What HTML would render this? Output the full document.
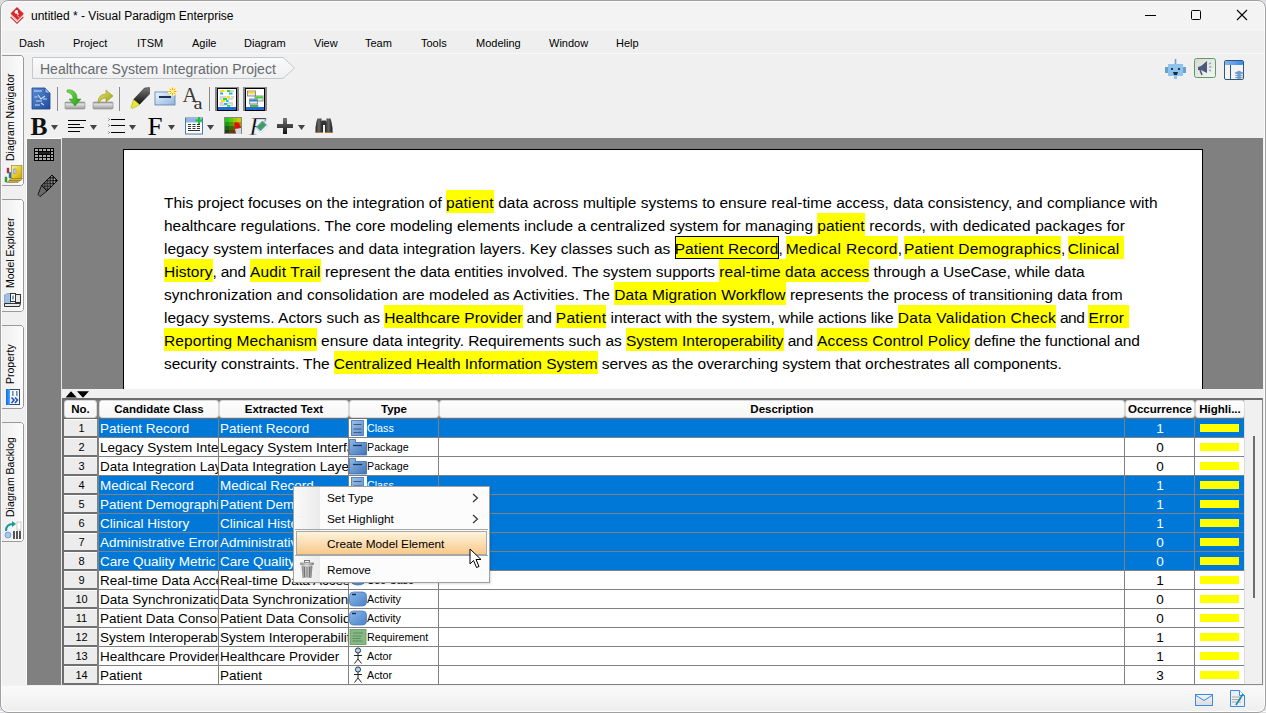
<!DOCTYPE html>
<html><head><meta charset="utf-8">
<style>
*{margin:0;padding:0;box-sizing:border-box}
html,body{width:1266px;height:713px;overflow:hidden;background:#dcdce0;font-family:"Liberation Sans",sans-serif;color:#000}
.a{position:absolute}
svg{display:block}
#titlebar{left:0;top:0;width:1266px;height:31px;background:#f3f3f3}
#menubar{left:0;top:31px;width:1266px;height:22px;background:#efefef}
.mi{position:absolute;top:37px;font-size:11px;color:#000;white-space:nowrap}
.vt{position:absolute;left:2px;width:22px;background:linear-gradient(to right,#fdfdfd,#f4f4f4);border:1px solid #c4c4c4;border-left:none;border-radius:0 6px 6px 0}
.vtt{position:absolute;left:4px;font-size:10.5px;line-height:12px;white-space:nowrap;transform-origin:0 0;transform:rotate(-90deg)}
#canvas{left:62px;top:138px;width:1201px;height:251px;background:#808080}
#subtb{left:27px;top:139px;width:34px;height:546px;background:#808080}
#page{left:123px;top:149px;width:1080px;height:240px;background:#fff;border:1px solid #000;border-bottom:none}
#doc{left:164px;top:191px;width:1010px;font-size:15.5px;line-height:23px;color:#000;white-space:nowrap}
#doc span.h{background:#ffff00;padding:4px 0 2px}
#doc span.b{box-shadow:inset 0 0 0 1px #000;position:relative;z-index:2}
.hd{position:absolute;top:400px;height:18px;background:linear-gradient(#fdfdfd,#f6f6f6);border:1px solid #d8d8d8;border-radius:3px;font-size:11.5px;font-weight:bold;text-align:center;line-height:16px;white-space:nowrap;overflow:hidden}
.nc{position:absolute;left:64px;width:33px;height:19px;background:#ececec;border-top:1px solid #fcfcfc;border-bottom:2px solid #707070;font-size:11px;text-align:center;line-height:16px;padding-left:2px}
.dc{position:absolute;font-size:13.5px;line-height:20px;padding-left:1px;white-space:nowrap;overflow:hidden}
.tc{padding-left:0}
.ti{position:absolute;left:0;top:0}
.tl{position:absolute;left:18px;top:0;font-size:10.7px;line-height:19px}
.oc{text-align:center;font-size:13.5px}
</style></head><body>
<div class="a" style="left:0;top:0;width:1266px;height:713px;background:#f0f0f0;border-radius:8px"></div>
<!-- title bar -->
<div class="a" id="titlebar" style="border-radius:8px 8px 0 0"></div>
<svg class="a" style="left:4px;top:4px" width="26" height="24" viewBox="4 4 26 24">
<path d="M17 7L23.8 13.8L17.5 20L10.5 13.5Z" fill="#d42a2a"/>
<path d="M11 16.5L17 22.5L23 16.5L23.8 17.3L17 24L10.2 17.3Z" fill="#d42a2a"/>
<path d="M11.5 14.5L17.2 20.3L23 14.5L23.5 15L17.2 21.3L11 15Z" fill="#e86a6a" opacity="0.7"/>
<path d="M15.5 10.5c1 -1 2.5 -0.5 2.5 0.8c0 0.8 -0.5 1.2 -0.2 1.6l1.2 1.2l-1 1l-1.6 -1.6c-0.5 0.2 -1.2 0 -1.6 -0.5c-0.6 -0.8 -0.1 -1.8 0.7 -2.5z" fill="#fff"/>
<path d="M17.2 15.3L19.2 17.3" stroke="#f8d8d8" stroke-width="0.8"/>
</svg>
<div class="a" style="left:31px;top:9px;font-size:12px;white-space:nowrap">untitled * - Visual Paradigm Enterprise</div>
<div class="a" style="left:1145px;top:15px;width:11px;height:1px;background:#000"></div>
<div class="a" style="left:1191px;top:10px;width:10px;height:10px;border:1px solid #000;border-radius:1.5px"></div>
<svg class="a" style="left:1236px;top:9px" width="12" height="12" viewBox="0 0 12 12"><path d="M1 1L11 11M11 1L1 11" stroke="#000" stroke-width="1.1"/></svg>

<!-- menu bar -->
<div class="a" id="menubar"></div>
<div class="a" style="left:0;top:53px;width:1266px;height:1px;background:#f8f8f8"></div>
<div class="mi" style="left:19px">Dash</div>
<div class="mi" style="left:73px">Project</div>
<div class="mi" style="left:137px">ITSM</div>
<div class="mi" style="left:192px">Agile</div>
<div class="mi" style="left:244px">Diagram</div>
<div class="mi" style="left:314px">View</div>
<div class="mi" style="left:365px">Team</div>
<div class="mi" style="left:421px">Tools</div>
<div class="mi" style="left:476px">Modeling</div>
<div class="mi" style="left:549px">Window</div>
<div class="mi" style="left:616px">Help</div>

<!-- vertical tabs -->
<svg class="a" style="left:0;top:0" width="26" height="560" viewBox="0 0 26 560"><defs><linearGradient id="vtg" x1="0" x2="1"><stop offset="0" stop-color="#efefef"/><stop offset="1" stop-color="#fcfcfc"/></linearGradient></defs><path d="M2 55.5H21.5L23.5 57.5V183.5L21.5 185.5H2" fill="url(#vtg)" stroke="#9a9a9a" stroke-width="1"/><path d="M2 199.5H21.5L23.5 201.5V309.5L21.5 311.5H2" fill="url(#vtg)" stroke="#9a9a9a" stroke-width="1"/><path d="M2 325.5H21.5L23.5 327.5V406.5L21.5 408.5H2" fill="url(#vtg)" stroke="#9a9a9a" stroke-width="1"/><path d="M2 422.5H21.5L23.5 424.5V539.5L21.5 541.5H2" fill="url(#vtg)" stroke="#9a9a9a" stroke-width="1"/></svg>
<div class="vtt" style="top:161px">Diagram Navigator</div>
<div class="vtt" style="top:288px">Model Explorer</div>
<div class="vtt" style="top:384px">Property</div>
<div class="vtt" style="top:517px">Diagram Backlog</div>

<!-- breadcrumb -->
<svg class="a" style="left:32px;top:56px" width="266" height="25" viewBox="32 56 266 25">
<defs><linearGradient id="bcg" x1="0" y1="0" x2="0" y2="1"><stop offset="0" stop-color="#fbfbfb"/><stop offset="1" stop-color="#efefef"/></linearGradient></defs>
<path d="M32.5 57.5H283L294.5 68L283 78.5H32.5Z" fill="url(#bcg)" stroke="#c3c9d1" stroke-width="1"/>
</svg>
<div class="a" style="left:40px;top:61px;font-size:14px;color:#656a70;white-space:nowrap">Healthcare System Integration Project</div>

<!-- canvas -->
<div class="a" style="left:26px;top:138px;width:36px;height:548px;background:#fbfbfb"></div><div class="a" id="subtb"></div>
<div class="a" style="left:61px;top:138px;width:1px;height:547px;background:#e8e8e8"></div>
<div class="a" id="canvas"></div>
<div class="a" id="page"></div>
<div class="a" id="doc"><span style="letter-spacing:-0.034px">This project focuses on the integration of </span><span class="h" style="letter-spacing:0.178px">patient</span><span style="letter-spacing:0.025px"> data across multiple systems to ensure real-time access, data consistency, and compliance with</span><br><span style="letter-spacing:-0.013px">healthcare regulations. The core modeling elements include a centralized system for managing </span><span class="h" style="letter-spacing:0.136px">patient</span><span style="letter-spacing:0.093px"> records, with dedicated packages for</span><br><span style="letter-spacing:0.008px">legacy system interfaces and data integration layers. Key classes such as </span><span class="h b" style="letter-spacing:0.098px">Patient Record</span><span style="letter-spacing:-0.761px">, </span><span class="h" style="letter-spacing:0.322px">Medical Record</span><span style="letter-spacing:-1.209px">, </span><span class="h" style="letter-spacing:0.220px">Patient Demographics</span><span style="letter-spacing:-0.959px">, </span><span class="h" style="letter-spacing:0.237px">Clinical </span><br><span class="h" style="letter-spacing:0.038px">History</span><span style="letter-spacing:-0.214px">, and </span><span class="h" style="letter-spacing:0.161px">Audit Trail</span><span style="letter-spacing:-0.046px"> represent the data entities involved. The system supports </span><span class="h" style="letter-spacing:0.132px">real-time data access</span><span style="letter-spacing:-0.036px"> through a UseCase, while data</span><br><span style="letter-spacing:0.038px">synchronization and consolidation are modeled as Activities. The </span><span class="h" style="letter-spacing:0.124px">Data Migration Workflow</span><span style="letter-spacing:0.005px"> represents the process of transitioning data from</span><br><span style="letter-spacing:0.020px">legacy systems. Actors such as </span><span class="h" style="letter-spacing:0.069px">Healthcare Provider</span><span style="letter-spacing:-0.276px"> and </span><span class="h" style="letter-spacing:0.334px">Patient</span><span style="letter-spacing:-0.087px"> interact with the system, while actions like </span><span class="h" style="letter-spacing:0.284px">Data Validation Check</span><span style="letter-spacing:-0.397px"> and </span><span class="h" style="letter-spacing:0.257px">Error </span><br><span class="h" style="letter-spacing:0.107px">Reporting Mechanism</span><span style="letter-spacing:-0.034px"> ensure data integrity. Requirements such as </span><span class="h" style="letter-spacing:-0.002px">System Interoperability</span><span style="letter-spacing:-0.218px"> and </span><span class="h" style="letter-spacing:0.148px">Access Control Policy</span><span style="letter-spacing:-0.136px"> define the functional and</span><br><span style="letter-spacing:-0.085px">security constraints. The </span><span class="h" style="letter-spacing:-0.042px">Centralized Health Information System</span><span style="letter-spacing:-0.055px"> serves as the overarching system that orchestrates all components.</span></div>

<!-- splitter -->
<div class="a" style="left:62px;top:389px;width:1201px;height:9px;background:#f0f0f0"></div>
<svg class="a" style="left:65px;top:391px" width="25" height="7" viewBox="0 0 25 7"><path d="M0.5 6.5L6 0.3L11.8 6.5Z" fill="#000"/><path d="M12 0.3H24L18 6.7Z" fill="#000"/></svg>

<!-- status bar -->
<div class="a" style="left:0;top:685px;width:1266px;height:28px;background:#f0f0f0;border-radius:0 0 8px 8px"></div><div class="a" style="left:0;top:686px;width:1266px;height:27px;background:linear-gradient(#fafafa,#eeeeee);border-radius:0 0 8px 8px"></div><div class="a" style="left:0;top:711px;width:1266px;height:1px;background:#fdfdfd"></div>
<!-- toolbar -->
<svg class="a" style="left:0;top:80px" width="350" height="58" viewBox="0 80 350 58">
<defs>
<linearGradient id="docb" x1="0" y1="0" x2="1" y2="1"><stop offset="0" stop-color="#5b8fd8"/><stop offset="1" stop-color="#1f4c9a"/></linearGradient>
<linearGradient id="barg" x1="0" y1="0" x2="0" y2="1"><stop offset="0" stop-color="#8e8e8e"/><stop offset="0.3" stop-color="#e0e0e0"/><stop offset="1" stop-color="#9a9a9a"/></linearGradient>
<linearGradient id="grn" x1="0" y1="0" x2="1" y2="1"><stop offset="0" stop-color="#7fe05a"/><stop offset="1" stop-color="#1f9a10"/></linearGradient>
<linearGradient id="yel" x1="0" y1="0" x2="1" y2="1"><stop offset="0" stop-color="#eaea70"/><stop offset="1" stop-color="#9a9a10"/></linearGradient>
<linearGradient id="boxb" x1="0" y1="0" x2="1" y2="1"><stop offset="0" stop-color="#eef5ff"/><stop offset="1" stop-color="#8fb3e0"/></linearGradient>
<linearGradient id="dgr" x1="0" y1="0" x2="0" y2="1"><stop offset="0" stop-color="#777"/><stop offset="1" stop-color="#111"/></linearGradient>
</defs>
<!-- doc icon -->
<path d="M32 88h13l5 5v16h-18z" fill="url(#docb)" stroke="#1c4185" stroke-width="0.8"/>
<path d="M45 88v5h5" fill="#8fb5ea" stroke="#1c4185" stroke-width="0.6"/>
<path d="M34 91h8M34.5 97h3M38 95l3 4l4 -3M36 101h6M41 103l3 2M35 105h5M43 99h4" stroke="#dfe9ff" stroke-width="1.1" fill="none" opacity="0.9"/>
<rect x="57" y="87" width="1" height="24" fill="#8a8a8a"/>
<!-- green import -->
<rect x="65" y="102" width="20" height="7" rx="1" fill="url(#barg)" stroke="#8a8a8a" stroke-width="0.6"/>
<path d="M67 90c5 -1 10 2 10 8v1h4l-6 7l-6 -7h4v-1c0 -3 -3 -5 -6 -6z" fill="url(#grn)" stroke="#2a8a1a" stroke-width="0.5"/>
<!-- yellow export -->
<rect x="93" y="102" width="20" height="7" rx="1" fill="url(#barg)" stroke="#8a8a8a" stroke-width="0.6"/>
<path d="M98 103c0 -6 3 -9 8 -9v-4l7 6l-7 6v-4c-3 0 -6 2 -7 5z" fill="url(#yel)" stroke="#8a8a10" stroke-width="0.5"/>
<rect x="119" y="87" width="1" height="24" fill="#8a8a8a"/>
<!-- highlighter -->
<path d="M133.5 99.5L144.5 88L149.5 87.5L149.5 94L139.5 104.5Z" fill="url(#dgr)" stroke="#222" stroke-width="0.5"/>
<path d="M133.5 99.5L139.5 104.5L136.5 106.5L132 108.5L131 107.5L132.5 103Z" fill="#e8e830" stroke="#a0a000" stroke-width="0.5"/>
<!-- blue box with star -->
<rect x="155" y="92" width="20" height="13" fill="url(#boxb)" stroke="#5a7fb0" stroke-width="0.8"/>
<rect x="159" y="96" width="12" height="2" fill="#1d3050"/>
<circle cx="172.5" cy="91.5" r="4.5" fill="#fff4b0"/>
<path d="M172.5 87.5v2.5M172.5 93v2.5M168.5 91.5h2.5M174 91.5h2.5M169.7 88.7l1.6 1.6M173.7 92.7l1.6 1.6M175.3 88.7l-1.6 1.6M171.3 92.7l-1.6 1.6" stroke="#f0a800" stroke-width="1"/>
<!-- Aa -->
<text x="182.5" y="102" font-family="Liberation Serif" font-size="20" fill="#3a3a3a" textLength="15" lengthAdjust="spacingAndGlyphs">A</text>
<text x="193.5" y="108.5" font-family="Liberation Serif" font-size="16" fill="#333" textLength="9" lengthAdjust="spacingAndGlyphs">a</text>
<rect x="209" y="87" width="1" height="24" fill="#8a8a8a"/>
<!-- diagram icon 1 -->
<rect x="215" y="87" width="24" height="24" fill="#888"/>
<rect x="217" y="88" width="20" height="23" fill="#000"/>
<rect x="218" y="89" width="18" height="18" fill="#fff"/>
<rect x="218" y="107" width="18" height="3" fill="#1e6ad8"/>
<rect x="221" y="90" width="3.5" height="2" fill="#ffe000"/><rect x="227" y="90" width="3.5" height="2" fill="#30e020"/>
<rect x="220" y="92.5" width="3" height="2" fill="#10b8ff"/><rect x="229" y="92.5" width="3.5" height="2" fill="#10b8ff"/>
<rect x="227" y="96" width="3" height="2" fill="#ffe000"/><rect x="223" y="98" width="4" height="2" fill="#30e020"/>
<rect x="221" y="100" width="4" height="2" fill="#ffe000"/><rect x="226" y="100" width="2.5" height="2" fill="#10b8ff"/>
<rect x="224" y="103" width="3.5" height="2" fill="#10b8ff"/><rect x="227" y="105" width="3.5" height="1.8" fill="#30e020"/>
<path d="M219.5 91h1.5M231 91h3M219.5 97h7M231 97h3M219.5 99h3M228 99h5M219.5 103h4M228 103h5M219.5 105h6M231 105h2" stroke="#aaa" stroke-width="1"/>
<!-- diagram icon 2 -->
<rect x="243" y="87" width="24" height="24" fill="#888"/>
<rect x="245" y="88" width="20" height="23" fill="#000"/>
<rect x="246" y="89" width="18" height="18" fill="#fff"/>
<rect x="246" y="107" width="18" height="3" fill="#1e6ad8"/>
<rect x="247.5" y="91" width="8" height="5" fill="#e8e8f0" stroke="#777" stroke-width="0.8"/><rect x="248" y="91.5" width="7" height="2" fill="#ffd800"/>
<rect x="255" y="96" width="8" height="5" fill="#e8e8f0" stroke="#777" stroke-width="0.8"/><rect x="255.5" y="96.5" width="7" height="2" fill="#30e020"/>
<rect x="249.5" y="99" width="8" height="5" fill="#f0ecec" stroke="#777" stroke-width="0.8"/><rect x="250" y="99.5" width="7" height="2" fill="#1e88e0"/>
<rect x="250.5" y="105" width="7.5" height="2" fill="#30e020" stroke="#777" stroke-width="0.6"/>

<!-- row 2 -->
<text x="30.5" y="135" font-family="Liberation Serif" font-weight="bold" font-size="26" fill="#111" textLength="17" lengthAdjust="spacingAndGlyphs">B</text>
<path d="M51 125h7l-3.5 5z" fill="#444"/>
<path d="M68 120.5h18M68 124.5h12M68 127.5h16M68 131.5h12" stroke="#000" stroke-width="1.1"/>
<path d="M90 125h7l-3.5 5z" fill="#444"/>
<path d="M111 119.5h14M111 125.5h14M111 132.5h14" stroke="#000" stroke-width="1.2"/>
<path d="M108.5 118.5l1 1l-1 1M108.5 124.5l1 1l-1 1M108.5 131.5l1 1l-1 1" stroke="#000" stroke-width="0.6" fill="none"/>
<path d="M129 125h7l-3.5 5z" fill="#444"/>
<text x="147.5" y="134.5" font-family="Liberation Serif" font-size="26" fill="#000" textLength="15" lengthAdjust="spacingAndGlyphs">F</text>
<path d="M168 125h7l-3.5 5z" fill="#444"/>
<!-- table icon -->
<rect x="185.5" y="118" width="17" height="16" fill="#fff" stroke="#4a7ba8" stroke-width="1"/>
<rect x="186" y="118.5" width="16" height="4" fill="#8fb5e8"/>
<path d="M188 124.5h3M192.5 124.5h3M197 124.5h3M188 126.5h3M192.5 126.5h3M197 126.5h3M188 128.5h3M192.5 128.5h3M197 128.5h3M188 130.5h12" stroke="#333" stroke-width="1"/>
<path d="M199 117v7M195.5 120.5h7" stroke="#22c030" stroke-width="2"/>
<path d="M207 125h7l-3.5 5z" fill="#444"/>
<!-- color grid -->
<rect x="224" y="117" width="18" height="17" fill="#888"/>
<rect x="225" y="118" width="4" height="4" fill="#22cc11"/><rect x="229" y="118" width="4" height="4" fill="#55cc11"/><rect x="233" y="118" width="4" height="4" fill="#99cc00"/><rect x="237" y="118" width="4" height="4" fill="#cccc00"/>
<rect x="225" y="122" width="4" height="4" fill="#1a9a10"/><rect x="229" y="122" width="4" height="4" fill="#4a9a10"/><rect x="233" y="122" width="4" height="4" fill="#889a00"/><rect x="237" y="122" width="4" height="4" fill="#aa9a00"/>
<rect x="225" y="126" width="4" height="4" fill="#156a10"/><rect x="229" y="126" width="4" height="4" fill="#3a6a10"/><rect x="233" y="126" width="4" height="4" fill="#6a6000"/><rect x="237" y="126" width="4" height="4" fill="#7a5a00"/>
<rect x="225" y="130" width="4" height="3" fill="#2a3a10"/><rect x="229" y="130" width="4" height="3" fill="#6a3a00"/><rect x="233" y="130" width="4" height="3" fill="#5a3a10"/><rect x="237" y="130" width="4" height="3" fill="#aaa"/>
<path d="M234 123c3 -2 6 0 6 3l-1 4l-3 1z" fill="#e01010"/>
<path d="M235 129l1 5l5 0l0 -6z" fill="#d8d8d8"/>
<!-- italic F eraser -->
<text x="249" y="134.5" font-family="Liberation Serif" font-style="italic" font-size="25" fill="#000" stroke="#f0f0f0" stroke-width="0.5" textLength="17" lengthAdjust="spacingAndGlyphs">F</text>
<path d="M256 128l7 -7l5 5l-7 7z" fill="#fff" stroke="#c8c8c8" stroke-width="0.6"/>
<path d="M256.5 127l6 -6l4 4l-6 6z" fill="#4a9a5a" stroke="#5aaaf0" stroke-width="0.8"/>
<!-- plus -->
<path d="M283 118h4v6h6v4h-6v6h-4v-6h-6v-4h6z" fill="url(#dgr)"/>
<path d="M298 125h7l-3.5 5z" fill="#444"/>
<!-- binoculars -->
<defs><linearGradient id="bino" x1="0" x2="1"><stop offset="0" stop-color="#222"/><stop offset="0.45" stop-color="#6a6a6a"/><stop offset="1" stop-color="#1a1a1a"/></linearGradient></defs>
<path d="M317.5 118.5h4v2.5l1.5 1v10.5h-7.5v-5l1 -6z" fill="url(#bino)"/>
<path d="M326.5 118.5h4l1 3.5l1 6v5h-7.5v-10.5l1.5 -1z" fill="url(#bino)"/>
<rect x="322" y="120.5" width="4" height="4.5" fill="#333"/>
<path d="M315.5 132.5h7.5M325 132.5h7.5" stroke="#b07a30" stroke-width="0.9"/>
</svg>
<div class="a" style="left:62px;top:398px;width:1201px;height:287px;background:#f0f0f0;border-top:2px solid #6d6d6d;border-left:2px solid #6d6d6d;border-right:1px solid #8a8a8a;border-bottom:1px solid #8a8a8a"></div>
<div class="a" style="left:64px;top:400px;width:1180px;height:18px;background:#808080"></div>
<div class="hd" style="left:64px;width:33px">No.</div>
<div class="hd" style="left:99px;width:120px">Candidate Class</div>
<div class="hd" style="left:219px;width:130px">Extracted Text</div>
<div class="hd" style="left:349px;width:90px">Type</div>
<div class="hd" style="left:439px;width:686px">Description</div>
<div class="hd" style="left:1125px;width:70px">Occurrence</div>
<div class="hd" style="left:1195px;width:50px">Highli...</div>
<div class="a" style="left:64px;top:418px;width:1180px;height:1px;background:#6d6d6d"></div>
<div class="a" style="left:97px;top:419px;width:1147px;height:266px;background:#808080"></div>
<div class="nc" style="top:419px">1</div>
<div class="dc" style="left:99px;top:419px;width:119px;height:18px;background:#0078d7;color:#fff">Patient Record</div>
<div class="dc" style="left:219px;top:419px;width:129px;height:18px;background:#0078d7;color:#fff">Patient Record</div>
<div class="dc tc" style="left:349px;top:419px;width:89px;height:18px;background:#0078d7;color:#fff"><span class="ti"><svg width="18" height="18" viewBox="0 0 18 18"><rect x="0" y="0" width="18" height="18" fill="#fff"/><defs><linearGradient id="cg" x1="0" y1="0" x2="1" y2="1"><stop offset="0" stop-color="#9cc0ea"/><stop offset="1" stop-color="#5b8fcf"/></linearGradient></defs><rect x="2.5" y="1.5" width="12" height="15" fill="url(#cg)" stroke="#5a86c0" stroke-width="1"/><path d="M4.5 5.5h8M4.5 10h8M4.5 13.5h8" stroke="#4a5a78" stroke-width="1"/></svg></span><span class="tl">Class</span></div>
<div class="dc" style="left:439px;top:419px;width:685px;height:18px;background:#0078d7;color:#fff"></div>
<div class="dc oc" style="left:1125px;top:419px;width:69px;height:18px;background:#0078d7;color:#fff">1</div>
<div class="dc" style="left:1195px;top:419px;width:49px;height:18px;background:#0078d7;color:#fff"><div style="position:absolute;left:5px;top:5px;width:39px;height:8px;background:#ffff00"></div></div>
<div class="nc" style="top:438px">2</div>
<div class="dc" style="left:99px;top:438px;width:119px;height:18px;background:#fff;color:#000">Legacy System Interfaces</div>
<div class="dc" style="left:219px;top:438px;width:129px;height:18px;background:#fff;color:#000">Legacy System Interfaces</div>
<div class="dc tc" style="left:349px;top:438px;width:89px;height:18px;background:#fff;color:#000"><span class="ti"><svg width="18" height="18" viewBox="0 0 18 18"><defs><linearGradient id="pg" x1="0" y1="0" x2="1" y2="1"><stop offset="0" stop-color="#8fb9e8"/><stop offset="1" stop-color="#3f74b8"/></linearGradient></defs><path d="M0.5 1.5h6v3h11v12.5h-17z" fill="url(#pg)" stroke="#3b6bb0" stroke-width="0.8"/><path d="M4 7.5h9" stroke="#1d355c" stroke-width="1.3"/></svg></span><span class="tl">Package</span></div>
<div class="dc" style="left:439px;top:438px;width:685px;height:18px;background:#fff;color:#000"></div>
<div class="dc oc" style="left:1125px;top:438px;width:69px;height:18px;background:#fff;color:#000">0</div>
<div class="dc" style="left:1195px;top:438px;width:49px;height:18px;background:#fff;color:#000"><div style="position:absolute;left:5px;top:5px;width:39px;height:8px;background:#ffff00"></div></div>
<div class="nc" style="top:457px">3</div>
<div class="dc" style="left:99px;top:457px;width:119px;height:18px;background:#fff;color:#000">Data Integration Layer</div>
<div class="dc" style="left:219px;top:457px;width:129px;height:18px;background:#fff;color:#000">Data Integration Layer</div>
<div class="dc tc" style="left:349px;top:457px;width:89px;height:18px;background:#fff;color:#000"><span class="ti"><svg width="18" height="18" viewBox="0 0 18 18"><defs><linearGradient id="pg" x1="0" y1="0" x2="1" y2="1"><stop offset="0" stop-color="#8fb9e8"/><stop offset="1" stop-color="#3f74b8"/></linearGradient></defs><path d="M0.5 1.5h6v3h11v12.5h-17z" fill="url(#pg)" stroke="#3b6bb0" stroke-width="0.8"/><path d="M4 7.5h9" stroke="#1d355c" stroke-width="1.3"/></svg></span><span class="tl">Package</span></div>
<div class="dc" style="left:439px;top:457px;width:685px;height:18px;background:#fff;color:#000"></div>
<div class="dc oc" style="left:1125px;top:457px;width:69px;height:18px;background:#fff;color:#000">0</div>
<div class="dc" style="left:1195px;top:457px;width:49px;height:18px;background:#fff;color:#000"><div style="position:absolute;left:5px;top:5px;width:39px;height:8px;background:#ffff00"></div></div>
<div class="nc" style="top:476px">4</div>
<div class="dc" style="left:99px;top:476px;width:119px;height:18px;background:#0078d7;color:#fff">Medical Record</div>
<div class="dc" style="left:219px;top:476px;width:129px;height:18px;background:#0078d7;color:#fff">Medical Record</div>
<div class="dc tc" style="left:349px;top:476px;width:89px;height:18px;background:#0078d7;color:#fff"><span class="ti"><svg width="18" height="18" viewBox="0 0 18 18"><rect x="0" y="0" width="18" height="18" fill="#fff"/><defs><linearGradient id="cg" x1="0" y1="0" x2="1" y2="1"><stop offset="0" stop-color="#9cc0ea"/><stop offset="1" stop-color="#5b8fcf"/></linearGradient></defs><rect x="2.5" y="1.5" width="12" height="15" fill="url(#cg)" stroke="#5a86c0" stroke-width="1"/><path d="M4.5 5.5h8M4.5 10h8M4.5 13.5h8" stroke="#4a5a78" stroke-width="1"/></svg></span><span class="tl">Class</span></div>
<div class="dc" style="left:439px;top:476px;width:685px;height:18px;background:#0078d7;color:#fff"></div>
<div class="dc oc" style="left:1125px;top:476px;width:69px;height:18px;background:#0078d7;color:#fff">1</div>
<div class="dc" style="left:1195px;top:476px;width:49px;height:18px;background:#0078d7;color:#fff"><div style="position:absolute;left:5px;top:5px;width:39px;height:8px;background:#ffff00"></div></div>
<div class="nc" style="top:495px">5</div>
<div class="dc" style="left:99px;top:495px;width:119px;height:18px;background:#0078d7;color:#fff">Patient Demographics</div>
<div class="dc" style="left:219px;top:495px;width:129px;height:18px;background:#0078d7;color:#fff">Patient Demographics</div>
<div class="dc tc" style="left:349px;top:495px;width:89px;height:18px;background:#0078d7;color:#fff"><span class="ti"><svg width="18" height="18" viewBox="0 0 18 18"><rect x="0" y="0" width="18" height="18" fill="#fff"/><defs><linearGradient id="cg" x1="0" y1="0" x2="1" y2="1"><stop offset="0" stop-color="#9cc0ea"/><stop offset="1" stop-color="#5b8fcf"/></linearGradient></defs><rect x="2.5" y="1.5" width="12" height="15" fill="url(#cg)" stroke="#5a86c0" stroke-width="1"/><path d="M4.5 5.5h8M4.5 10h8M4.5 13.5h8" stroke="#4a5a78" stroke-width="1"/></svg></span><span class="tl">Class</span></div>
<div class="dc" style="left:439px;top:495px;width:685px;height:18px;background:#0078d7;color:#fff"></div>
<div class="dc oc" style="left:1125px;top:495px;width:69px;height:18px;background:#0078d7;color:#fff">1</div>
<div class="dc" style="left:1195px;top:495px;width:49px;height:18px;background:#0078d7;color:#fff"><div style="position:absolute;left:5px;top:5px;width:39px;height:8px;background:#ffff00"></div></div>
<div class="nc" style="top:514px">6</div>
<div class="dc" style="left:99px;top:514px;width:119px;height:18px;background:#0078d7;color:#fff">Clinical History</div>
<div class="dc" style="left:219px;top:514px;width:129px;height:18px;background:#0078d7;color:#fff">Clinical History</div>
<div class="dc tc" style="left:349px;top:514px;width:89px;height:18px;background:#0078d7;color:#fff"><span class="ti"><svg width="18" height="18" viewBox="0 0 18 18"><rect x="0" y="0" width="18" height="18" fill="#fff"/><defs><linearGradient id="cg" x1="0" y1="0" x2="1" y2="1"><stop offset="0" stop-color="#9cc0ea"/><stop offset="1" stop-color="#5b8fcf"/></linearGradient></defs><rect x="2.5" y="1.5" width="12" height="15" fill="url(#cg)" stroke="#5a86c0" stroke-width="1"/><path d="M4.5 5.5h8M4.5 10h8M4.5 13.5h8" stroke="#4a5a78" stroke-width="1"/></svg></span><span class="tl">Class</span></div>
<div class="dc" style="left:439px;top:514px;width:685px;height:18px;background:#0078d7;color:#fff"></div>
<div class="dc oc" style="left:1125px;top:514px;width:69px;height:18px;background:#0078d7;color:#fff">1</div>
<div class="dc" style="left:1195px;top:514px;width:49px;height:18px;background:#0078d7;color:#fff"><div style="position:absolute;left:5px;top:5px;width:39px;height:8px;background:#ffff00"></div></div>
<div class="nc" style="top:533px">7</div>
<div class="dc" style="left:99px;top:533px;width:119px;height:18px;background:#0078d7;color:#fff">Administrative Error</div>
<div class="dc" style="left:219px;top:533px;width:129px;height:18px;background:#0078d7;color:#fff">Administrative Error</div>
<div class="dc tc" style="left:349px;top:533px;width:89px;height:18px;background:#0078d7;color:#fff"><span class="ti"><svg width="18" height="18" viewBox="0 0 18 18"><rect x="0" y="0" width="18" height="18" fill="#fff"/><defs><linearGradient id="cg" x1="0" y1="0" x2="1" y2="1"><stop offset="0" stop-color="#9cc0ea"/><stop offset="1" stop-color="#5b8fcf"/></linearGradient></defs><rect x="2.5" y="1.5" width="12" height="15" fill="url(#cg)" stroke="#5a86c0" stroke-width="1"/><path d="M4.5 5.5h8M4.5 10h8M4.5 13.5h8" stroke="#4a5a78" stroke-width="1"/></svg></span><span class="tl">Class</span></div>
<div class="dc" style="left:439px;top:533px;width:685px;height:18px;background:#0078d7;color:#fff"></div>
<div class="dc oc" style="left:1125px;top:533px;width:69px;height:18px;background:#0078d7;color:#fff">0</div>
<div class="dc" style="left:1195px;top:533px;width:49px;height:18px;background:#0078d7;color:#fff"><div style="position:absolute;left:5px;top:5px;width:39px;height:8px;background:#ffff00"></div></div>
<div class="nc" style="top:552px">8</div>
<div class="dc" style="left:99px;top:552px;width:119px;height:18px;background:#0078d7;color:#fff">Care Quality Metric</div>
<div class="dc" style="left:219px;top:552px;width:129px;height:18px;background:#0078d7;color:#fff">Care Quality Metric</div>
<div class="dc tc" style="left:349px;top:552px;width:89px;height:18px;background:#0078d7;color:#fff"><span class="ti"><svg width="18" height="18" viewBox="0 0 18 18"><rect x="0" y="0" width="18" height="18" fill="#fff"/><defs><linearGradient id="cg" x1="0" y1="0" x2="1" y2="1"><stop offset="0" stop-color="#9cc0ea"/><stop offset="1" stop-color="#5b8fcf"/></linearGradient></defs><rect x="2.5" y="1.5" width="12" height="15" fill="url(#cg)" stroke="#5a86c0" stroke-width="1"/><path d="M4.5 5.5h8M4.5 10h8M4.5 13.5h8" stroke="#4a5a78" stroke-width="1"/></svg></span><span class="tl">Class</span></div>
<div class="dc" style="left:439px;top:552px;width:685px;height:18px;background:#0078d7;color:#fff"></div>
<div class="dc oc" style="left:1125px;top:552px;width:69px;height:18px;background:#0078d7;color:#fff">0</div>
<div class="dc" style="left:1195px;top:552px;width:49px;height:18px;background:#0078d7;color:#fff"><div style="position:absolute;left:5px;top:5px;width:39px;height:8px;background:#ffff00"></div></div>
<div class="nc" style="top:571px">9</div>
<div class="dc" style="left:99px;top:571px;width:119px;height:18px;background:#fff;color:#000">Real-time Data Access</div>
<div class="dc" style="left:219px;top:571px;width:129px;height:18px;background:#fff;color:#000">Real-time Data Access</div>
<div class="dc tc" style="left:349px;top:571px;width:89px;height:18px;background:#fff;color:#000"><span class="ti"><svg width="18" height="18" viewBox="0 0 18 18"><ellipse cx="9" cy="8" rx="8.5" ry="6" fill="#5b95d6" stroke="#3b6bb0" stroke-width="0.8"/></svg></span><span class="tl">Use Case</span></div>
<div class="dc" style="left:439px;top:571px;width:685px;height:18px;background:#fff;color:#000"></div>
<div class="dc oc" style="left:1125px;top:571px;width:69px;height:18px;background:#fff;color:#000">1</div>
<div class="dc" style="left:1195px;top:571px;width:49px;height:18px;background:#fff;color:#000"><div style="position:absolute;left:5px;top:5px;width:39px;height:8px;background:#ffff00"></div></div>
<div class="nc" style="top:590px">10</div>
<div class="dc" style="left:99px;top:590px;width:119px;height:18px;background:#fff;color:#000">Data Synchronization</div>
<div class="dc" style="left:219px;top:590px;width:129px;height:18px;background:#fff;color:#000">Data Synchronization</div>
<div class="dc tc" style="left:349px;top:590px;width:89px;height:18px;background:#fff;color:#000"><span class="ti"><svg width="18" height="18" viewBox="0 0 18 18"><defs><linearGradient id="ag" x1="0" y1="0" x2="1" y2="1"><stop offset="0" stop-color="#8ab8ea"/><stop offset="1" stop-color="#4a82c8"/></linearGradient></defs><rect x="0.5" y="2" width="17" height="14" rx="4" fill="url(#ag)" stroke="#4a7fc0" stroke-width="0.8"/><path d="M3 4.5h4" stroke="#1a2a40" stroke-width="1.4"/></svg></span><span class="tl">Activity</span></div>
<div class="dc" style="left:439px;top:590px;width:685px;height:18px;background:#fff;color:#000"></div>
<div class="dc oc" style="left:1125px;top:590px;width:69px;height:18px;background:#fff;color:#000">0</div>
<div class="dc" style="left:1195px;top:590px;width:49px;height:18px;background:#fff;color:#000"><div style="position:absolute;left:5px;top:5px;width:39px;height:8px;background:#ffff00"></div></div>
<div class="nc" style="top:609px">11</div>
<div class="dc" style="left:99px;top:609px;width:119px;height:18px;background:#fff;color:#000">Patient Data Consolidation</div>
<div class="dc" style="left:219px;top:609px;width:129px;height:18px;background:#fff;color:#000">Patient Data Consolidation</div>
<div class="dc tc" style="left:349px;top:609px;width:89px;height:18px;background:#fff;color:#000"><span class="ti"><svg width="18" height="18" viewBox="0 0 18 18"><defs><linearGradient id="ag" x1="0" y1="0" x2="1" y2="1"><stop offset="0" stop-color="#8ab8ea"/><stop offset="1" stop-color="#4a82c8"/></linearGradient></defs><rect x="0.5" y="2" width="17" height="14" rx="4" fill="url(#ag)" stroke="#4a7fc0" stroke-width="0.8"/><path d="M3 4.5h4" stroke="#1a2a40" stroke-width="1.4"/></svg></span><span class="tl">Activity</span></div>
<div class="dc" style="left:439px;top:609px;width:685px;height:18px;background:#fff;color:#000"></div>
<div class="dc oc" style="left:1125px;top:609px;width:69px;height:18px;background:#fff;color:#000">0</div>
<div class="dc" style="left:1195px;top:609px;width:49px;height:18px;background:#fff;color:#000"><div style="position:absolute;left:5px;top:5px;width:39px;height:8px;background:#ffff00"></div></div>
<div class="nc" style="top:628px">12</div>
<div class="dc" style="left:99px;top:628px;width:119px;height:18px;background:#fff;color:#000">System Interoperability</div>
<div class="dc" style="left:219px;top:628px;width:129px;height:18px;background:#fff;color:#000">System Interoperability</div>
<div class="dc tc" style="left:349px;top:628px;width:89px;height:18px;background:#fff;color:#000"><span class="ti"><svg width="18" height="18" viewBox="0 0 18 18"><rect x="1" y="1.5" width="16" height="15" fill="#86b886" stroke="#5e9a5e" stroke-width="0.8"/><path d="M4 5h10M3.5 8h9M3.5 10.5h8M3.5 13h10" stroke="#4d7f4d" stroke-width="0.9" opacity="0.8"/></svg></span><span class="tl">Requirement</span></div>
<div class="dc" style="left:439px;top:628px;width:685px;height:18px;background:#fff;color:#000"></div>
<div class="dc oc" style="left:1125px;top:628px;width:69px;height:18px;background:#fff;color:#000">1</div>
<div class="dc" style="left:1195px;top:628px;width:49px;height:18px;background:#fff;color:#000"><div style="position:absolute;left:5px;top:5px;width:39px;height:8px;background:#ffff00"></div></div>
<div class="nc" style="top:647px">13</div>
<div class="dc" style="left:99px;top:647px;width:119px;height:18px;background:#fff;color:#000">Healthcare Provider</div>
<div class="dc" style="left:219px;top:647px;width:129px;height:18px;background:#fff;color:#000">Healthcare Provider</div>
<div class="dc tc" style="left:349px;top:647px;width:89px;height:18px;background:#fff;color:#000"><span class="ti"><svg width="18" height="18" viewBox="0 0 18 18"><circle cx="9" cy="3.5" r="2.6" fill="#a9d8f5" stroke="#222" stroke-width="0.9"/><path d="M9 6.2v5.8M5 8.5h8M9 12L5.5 16.5M9 12l3.5 4.5" stroke="#222" stroke-width="1" fill="none"/></svg></span><span class="tl">Actor</span></div>
<div class="dc" style="left:439px;top:647px;width:685px;height:18px;background:#fff;color:#000"></div>
<div class="dc oc" style="left:1125px;top:647px;width:69px;height:18px;background:#fff;color:#000">1</div>
<div class="dc" style="left:1195px;top:647px;width:49px;height:18px;background:#fff;color:#000"><div style="position:absolute;left:5px;top:5px;width:39px;height:8px;background:#ffff00"></div></div>
<div class="nc" style="top:666px">14</div>
<div class="dc" style="left:99px;top:666px;width:119px;height:18px;background:#fff;color:#000">Patient</div>
<div class="dc" style="left:219px;top:666px;width:129px;height:18px;background:#fff;color:#000">Patient</div>
<div class="dc tc" style="left:349px;top:666px;width:89px;height:18px;background:#fff;color:#000"><span class="ti"><svg width="18" height="18" viewBox="0 0 18 18"><circle cx="9" cy="3.5" r="2.6" fill="#a9d8f5" stroke="#222" stroke-width="0.9"/><path d="M9 6.2v5.8M5 8.5h8M9 12L5.5 16.5M9 12l3.5 4.5" stroke="#222" stroke-width="1" fill="none"/></svg></span><span class="tl">Actor</span></div>
<div class="dc" style="left:439px;top:666px;width:685px;height:18px;background:#fff;color:#000"></div>
<div class="dc oc" style="left:1125px;top:666px;width:69px;height:18px;background:#fff;color:#000">3</div>
<div class="dc" style="left:1195px;top:666px;width:49px;height:18px;background:#fff;color:#000"><div style="position:absolute;left:5px;top:5px;width:39px;height:8px;background:#ffff00"></div></div>
<div class="a" style="left:1244px;top:400px;width:18px;height:284px;background:#f0f0f0;border-left:1px solid #dcdcdc"></div>
<div class="a" style="left:1253px;top:436px;width:2px;height:162px;background:#6d6d6d"></div><!-- context menu -->
<div class="a" style="left:293px;top:486px;width:197px;height:97px;background:#fcfcfc;border:1px solid #a0a0a0;box-shadow:1px 1px 2px rgba(0,0,0,0.15)"></div>
<div class="a" style="left:294px;top:487px;width:26px;height:95px;background:linear-gradient(to right,#fafafa,#ebebeb)"></div>
<div class="a" style="left:295px;top:529px;width:193px;height:1px;background:#a6a6a6"></div>
<div class="a" style="left:295px;top:555px;width:193px;height:1px;background:#a6a6a6"></div>
<div class="a" style="left:296px;top:531px;width:191px;height:24px;background:linear-gradient(#fdf3dc,#f9c98a);border:1px solid #a8a8a8"></div>
<div class="a" style="left:327px;top:491px;font-size:11.8px;white-space:nowrap">Set Type</div>
<div class="a" style="left:327px;top:512px;font-size:11.8px;white-space:nowrap">Set Highlight</div>
<div class="a" style="left:327px;top:537px;font-size:11.8px;white-space:nowrap">Create Model Element</div>
<div class="a" style="left:327px;top:563px;font-size:11.8px;white-space:nowrap">Remove</div>
<svg class="a" style="left:472px;top:493px" width="7" height="10" viewBox="0 0 7 10"><path d="M1 1L5.5 5L1 9" stroke="#333" stroke-width="1.2" fill="none"/></svg>
<svg class="a" style="left:472px;top:514px" width="7" height="10" viewBox="0 0 7 10"><path d="M1 1L5.5 5L1 9" stroke="#333" stroke-width="1.2" fill="none"/></svg>
<svg class="a" style="left:299px;top:560px" width="16" height="19" viewBox="0 0 16 19"><defs><linearGradient id="tr" x1="0" x2="1"><stop offset="0" stop-color="#8a8a8a"/><stop offset="0.5" stop-color="#d0d0d0"/><stop offset="1" stop-color="#7a7a7a"/></linearGradient></defs>
<rect x="5.5" y="0.5" width="5" height="2" fill="none" stroke="#777"/><rect x="1" y="2.5" width="14" height="2.5" rx="1" fill="url(#tr)"/><path d="M2.5 5.5h11l-1 12.5h-9z" fill="url(#tr)"/><path d="M5.5 7v10M8 7v10M10.5 7v10" stroke="#666" stroke-width="0.8"/></svg>
<!-- cursor -->
<svg class="a" style="left:469px;top:548px" width="14" height="21" viewBox="0 0 14 21"><path d="M1 1V16L4.5 12.5L7.5 19.5L10 18.5L7 11.5H12Z" fill="#fff" stroke="#000" stroke-width="1"/></svg>
<!-- right top icons -->
<svg class="a" style="left:1160px;top:55px" width="90" height="28" viewBox="1160 55 90 28">
<defs><linearGradient id="megb" x1="0" y1="0" x2="1" y2="1"><stop offset="0" stop-color="#d8d8d8"/><stop offset="1" stop-color="#f6f6f6"/></linearGradient>
<linearGradient id="lay" x1="0" y1="0" x2="1" y2="0"><stop offset="0" stop-color="#8ab0e8"/><stop offset="1" stop-color="#3a88e8"/></linearGradient></defs>
<!-- robot -->
<path d="M1175.5 59v5" stroke="#6aa6d8" stroke-width="1.6"/>
<rect x="1168" y="64" width="15" height="12" fill="#8dc3ec"/>
<rect x="1165" y="67" width="3" height="6" fill="#6aa0cc"/><rect x="1183" y="67" width="3" height="6" fill="#6aa0cc"/>
<rect x="1171" y="68" width="2" height="2" fill="#2a3a50"/><rect x="1178" y="68" width="2" height="2" fill="#2a3a50"/>
<path d="M1173 72h5l-1 3h-3z" fill="#1a2a40"/>
<rect x="1174" y="76" width="3" height="3" fill="#8dc3ec"/>
<!-- megaphone -->
<rect x="1194.5" y="58.5" width="21" height="19" rx="2" fill="url(#megb)" stroke="#5aa05a" stroke-width="1"/>
<path d="M1198 67l3 -1l6 -5v12l-6 -3l-3 0z" fill="#4a5a78"/>
<path d="M1200 70l2 5" stroke="#4a5a78" stroke-width="1.5"/>
<path d="M1209 64l2 -1M1209 67h2.5M1209 70l2 1" stroke="#4a5a78" stroke-width="0.7"/>
<!-- layout icon -->
<rect x="1224.5" y="60.5" width="19" height="19" rx="1.5" fill="#f4f4f4" stroke="#2a5a80" stroke-width="1"/>
<rect x="1225" y="61" width="18" height="4" rx="1" fill="url(#lay)"/>
<path d="M1230.5 65v14.5" stroke="#2a5a80" stroke-width="1"/>
<path d="M1235 73l4 -2l4 2l-4 2z M1235 75l4 2l4 -2M1235 77l4 2l4 -2" fill="#5aa0ee" stroke="#888" stroke-width="0.6"/>
</svg>

<!-- tab icons -->
<svg class="a" style="left:0;top:160px" width="26" height="26" viewBox="0 160 26 26">
<defs><linearGradient id="bky" x1="0" y1="0" x2="1" y2="1"><stop offset="0" stop-color="#fff2a0"/><stop offset="0.5" stop-color="#e8cc30"/><stop offset="1" stop-color="#c8a810"/></linearGradient></defs>
<path d="M5 177h2v5h-2z" fill="#10c010" stroke="#555" stroke-width="0.4"/>
<path d="M7 168h2v5h-2z" fill="#e81050" stroke="#555" stroke-width="0.4"/>
<path d="M9 172.5h2v5.5h-2z" fill="#1080e0" stroke="#555" stroke-width="0.4"/>
<path d="M7 182.5h11l2 -2h-11z" fill="#c8a820" stroke="#555" stroke-width="0.4"/>
<path d="M9 180.5h12l1.5 -2h-12z" fill="#d8b820" stroke="#555" stroke-width="0.4"/>
<rect x="11.5" y="165.5" width="10.5" height="13" fill="url(#bky)" stroke="#8a7a20" stroke-width="0.6"/>
<rect x="13.5" y="169" width="2.5" height="4.5" fill="#b8d0f0" stroke="#6a8ac0" stroke-width="0.5"/>
</svg>
<svg class="a" style="left:0px;top:285px" width="26" height="26" viewBox="0 285 26 26">
<path d="M4.5 295l3 -1.5h3v12h-6z" fill="#9ec0e8" stroke="#6a8ab0" stroke-width="0.6"/>
<rect x="10.5" y="293.5" width="5" height="8" fill="#fff" stroke="#333" stroke-width="1"/>
<rect x="12" y="295.5" width="2" height="4" fill="#7aa0d0"/>
<rect x="15.5" y="294.5" width="5" height="8" fill="#e8e8e8" stroke="#333" stroke-width="1"/>
<path d="M4.5 303.5h16l-1 3h-15z" fill="#e8e8e8" stroke="#333" stroke-width="1"/>
</svg>
<svg class="a" style="left:0px;top:383px" width="26" height="26" viewBox="0 383 26 26">
<defs><linearGradient id="pbl" x1="0" x2="1"><stop offset="0" stop-color="#0a6af0"/><stop offset="1" stop-color="#4aa8f8"/></linearGradient></defs>
<rect x="6.5" y="389.5" width="13" height="15" fill="#f4f8ff" stroke="#3a4a60" stroke-width="1"/>
<rect x="6" y="389" width="4" height="16" rx="1" fill="url(#pbl)"/>
<rect x="12" y="391" width="1.6" height="5" fill="#7a8aa8"/><rect x="16" y="391" width="1.6" height="5" fill="#7a8aa8"/>
<path d="M11.5 397.5l2.5 2.5l-2.5 3M15 397.5l2.5 2.5l-2.5 3" stroke="#1a50d0" stroke-width="1.6" fill="none"/>
</svg>
<svg class="a" style="left:3px;top:520px" width="20" height="20" viewBox="0 0 20 20">
<path d="M3 11c0 -5 3 -7 7 -7" stroke="#1a9a9a" stroke-width="2" fill="none"/><path d="M9 1l4 3l-4 3z" fill="#1a9a9a"/>
<circle cx="5" cy="15" r="3" fill="#a8c8f0" stroke="#5a8ad0" stroke-width="0.7"/>
<rect x="10" y="11" width="2" height="8" fill="#555"/><rect x="13" y="11" width="2" height="8" fill="#555"/><rect x="16" y="11" width="2" height="8" fill="#555"/>
<rect x="14" y="2" width="4" height="8" fill="#fff" stroke="#aaa" stroke-width="0.6"/>
</svg>

<!-- sub toolbar icons -->

<svg class="a" style="left:28px;top:140px" width="34" height="60" viewBox="28 140 34 60">
<rect x="34" y="148" width="20" height="13" fill="#000"/>
<g fill="#a8a8a8">
<rect x="35" y="149" width="3" height="2"/><rect x="39" y="149" width="3" height="2"/><rect x="43" y="149" width="3" height="2"/><rect x="47" y="149" width="3" height="2"/><rect x="51" y="149" width="2" height="2"/>
<rect x="35" y="152" width="3" height="2"/><rect x="51" y="152" width="2" height="2"/>
<rect x="35" y="155" width="3" height="2"/><rect x="39" y="155" width="3" height="2"/><rect x="43" y="155" width="3" height="2"/><rect x="47" y="155" width="3" height="2"/><rect x="51" y="155" width="2" height="2"/>
<rect x="35" y="158" width="3" height="2"/><rect x="39" y="158" width="3" height="2"/><rect x="43" y="158" width="3" height="2"/><rect x="47" y="158" width="3" height="2"/><rect x="51" y="158" width="2" height="2"/>
</g>
<rect x="39" y="152" width="11" height="2" fill="#222"/>
<defs><pattern id="chk" width="2.2" height="2.2" patternUnits="userSpaceOnUse" patternTransform="rotate(45)"><rect width="2.2" height="2.2" fill="#000"/><rect width="1" height="1" fill="#b0b0b0"/><rect x="1.1" y="1.1" width="1" height="1" fill="#b0b0b0"/></pattern></defs>
<path d="M41.5 185.5L52 175L57.5 180.5L47 191Z" fill="url(#chk)" stroke="#000" stroke-width="0.9"/>
<path d="M41.5 185.5L47 191L40 196.5L38 194.5Z" fill="#6a6a6a" stroke="#000" stroke-width="0.8"/>
</svg>
<!-- status bar icons -->
<svg class="a" style="left:1194px;top:689px" width="54" height="20" viewBox="1194 689 54 20">
<defs><linearGradient id="env" x1="0" y1="0" x2="0" y2="1"><stop offset="0" stop-color="#f4f4f4"/><stop offset="1" stop-color="#dcdcdc"/></linearGradient></defs>
<rect x="1195.5" y="694.5" width="17" height="11" fill="url(#env)" stroke="#3a8ae8" stroke-width="1"/>
<path d="M1196 695.5l8 5l8 -5" stroke="#3a8ae8" stroke-width="1" fill="none"/>
<path d="M1230.5 690.5h9l5 5v11h-14z" fill="#eceef2" stroke="#3a8ae8" stroke-width="1"/>
<path d="M1239.5 690.5v5h5" fill="#fff" stroke="#3a8ae8" stroke-width="1"/>
<path d="M1232 697h8M1232 699.5h9M1232 702h9" stroke="#aaa" stroke-width="1"/>
<path d="M1236 705l7 -11" stroke="#1a8aaa" stroke-width="1.6"/>
</svg>

<!-- window border -->
<div class="a" style="left:0;top:0;width:1266px;height:713px;border:1px solid #a0a0a0;border-radius:8px;box-shadow:inset 0 0 0 1px rgba(255,255,255,0.7);pointer-events:none"></div>

</body></html>
